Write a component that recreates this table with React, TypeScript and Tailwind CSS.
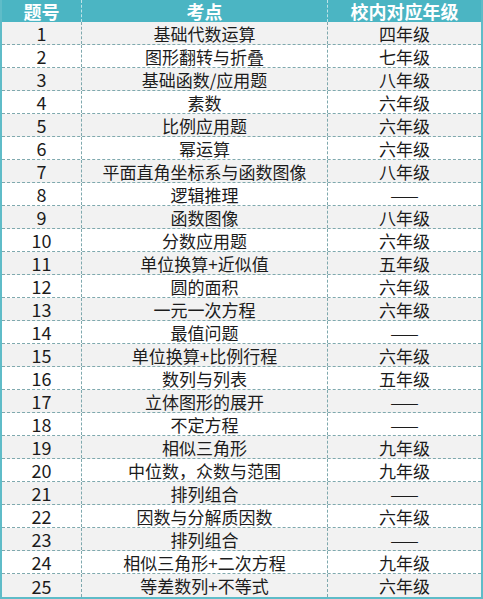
import React from 'react';

const rows: [string, string][] = [
  ['基础代数运算', '四年级'],
  ['图形翻转与折叠', '七年级'],
  ['基础函数/应用题', '八年级'],
  ['素数', '六年级'],
  ['比例应用题', '六年级'],
  ['幂运算', '六年级'],
  ['平面直角坐标系与函数图像', '八年级'],
  ['逻辑推理', '——'],
  ['函数图像', '八年级'],
  ['分数应用题', '六年级'],
  ['单位换算+近似值', '五年级'],
  ['圆的面积', '六年级'],
  ['一元一次方程', '六年级'],
  ['最值问题', '——'],
  ['单位换算+比例行程', '六年级'],
  ['数列与列表', '五年级'],
  ['立体图形的展开', '——'],
  ['不定方程', '——'],
  ['相似三角形', '九年级'],
  ['中位数，众数与范围', '九年级'],
  ['排列组合', '——'],
  ['因数与分解质因数', '六年级'],
  ['排列组合', '——'],
  ['相似三角形+二次方程', '九年级'],
  ['等差数列+不等式', '六年级'],
];

export default function App() {
  return (
    <div
      className="w-[483px] h-[599px] bg-white border-x-2 border-b-2 border-[#5fbcc8] text-[#1c1c1c] text-[17px] leading-none"
      style={{ fontFamily: '"Noto Sans CJK SC", "Noto Sans", sans-serif' }}
    >
      <div className="flex h-[22px] bg-[#4bb5c3] text-white font-bold text-[18px]">
        <div className="w-[80px] flex items-center justify-center border-r border-dashed border-[#bfe3e8]">题号</div>
        <div className="w-[246px] flex items-center justify-center border-r border-dashed border-[#bfe3e8]">考点</div>
        <div className="flex-1 flex items-center justify-center">校内对应年级</div>
      </div>
      {rows.map(([topic, grade], i) => (
        <div
          key={i}
          className={`flex h-[23px] border-dashed border-[#7fa9ae] ${i < rows.length - 1 ? 'border-b' : ''} ${i % 2 === 0 ? 'bg-[#f2f2f2]' : 'bg-white'}`}
        >
          <div className="w-[80px] flex items-center justify-center border-r border-dashed border-[#7fa9ae] text-[18px]">{i + 1}</div>
          <div className="w-[246px] flex items-center justify-center border-r border-dashed border-[#7fa9ae]">{topic}</div>
          <div className="flex-1 flex items-center justify-center">{grade}</div>
        </div>
      ))}
    </div>
  );
}
